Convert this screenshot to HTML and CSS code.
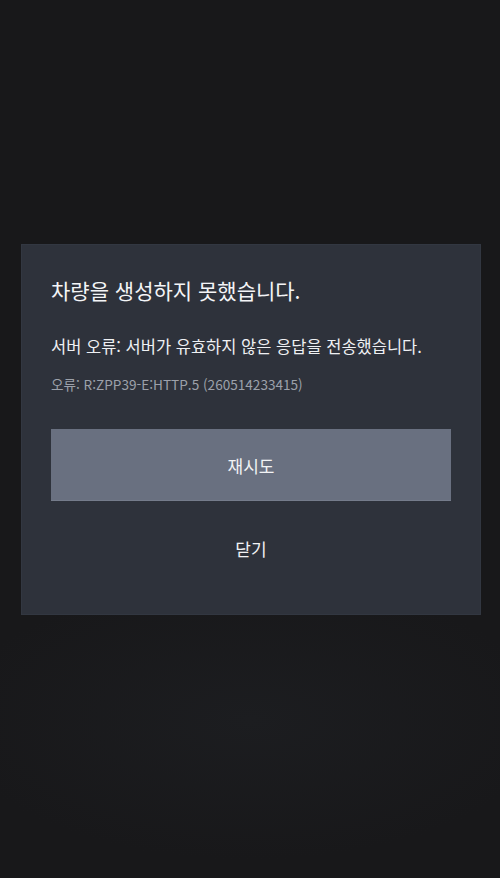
FILE: index.html
```html
<!DOCTYPE html>
<html lang="ko">
<head>
<meta charset="utf-8">
<title>오류</title>
<link rel="stylesheet" href="styles.css">
</head>
<body>
<div class="screen">
  <div class="dialog">
    <h1 class="title">차량을 생성하지 못했습니다.</h1>
    <p class="message">서버 오류: 서버가 유효하지 않은 응답을 전송했습니다.</p>
    <p class="code">오류: R:ZPP39-E:HTTP.5 (260514233415)</p>
    <button class="btn primary">재시도</button>
    <button class="btn secondary">닫기</button>
  </div>
</div>
</body>
</html>
```
FILE: styles.css
```css
html, body {
  margin: 0;
  padding: 0;
  height: 100%;
}
body {
  background: #18181a;
  font-family: "Noto Sans CJK KR", "Noto Sans", sans-serif;
  color: #f2f3f5;
}
.screen {
  height: 878px;
  box-sizing: border-box;
  padding: 244px 19px 0 21px;
  background: radial-gradient(ellipse 300px 140px at 250px 720px, #1c1d20 0%, #18181a 100%);
}
.dialog {
  background: #2e323b;
  box-shadow: inset 0 0 0 1px #323741;
  padding: 32px 30px 37px 30px;
  display: flex;
  flex-direction: column;
}
.title {
  margin: 0;
  font-size: 21px;
  line-height: 28px;
  font-weight: 400;
  color: #f4f5f7;
}
.message {
  margin: 30px 0 0 0;
  font-size: 16.5px;
  line-height: 24px;
  color: #eef0f3;
}
.code {
  margin: 17px 0 0 0;
  font-size: 13.6px;
  line-height: 18px;
  color: #9ca1aa;
}
.btn {
  font-family: inherit;
  border: none;
  cursor: pointer;
  display: block;
  width: 100%;
  color: #f2f3f5;
  font-size: 17px;
}
.primary {
  margin-top: 36px;
  height: 72px;
  background: #697080;
  box-shadow: inset 0 -1px 0 #757c8b;
}
.secondary {
  margin-top: 17px;
  height: 60px;
  background: transparent;
}
```
